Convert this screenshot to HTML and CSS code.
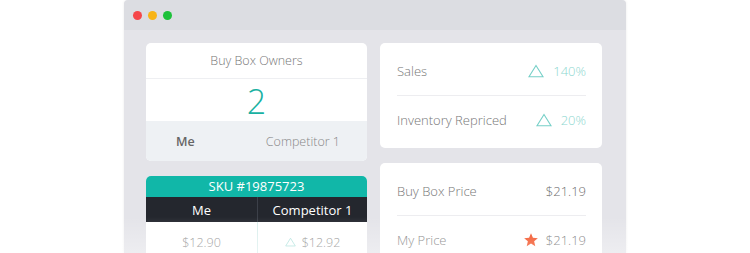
FILE: index.html
```html
<!DOCTYPE html>
<html lang="en">
<head>
    <meta charset="UTF-8">
    <meta name="viewport" content="width=device-width, initial-scale=1.0">
    <title>Repricer Dashboard</title>
    <link rel="stylesheet" href="styles.css">
</head>
<body>
    <div class="window">
        <div class="titlebar">
            <span class="dot dot-red"></span>
            <span class="dot dot-yellow"></span>
            <span class="dot dot-green"></span>
        </div>

        <div class="content">
            <div class="column">
                <div class="card owners">
                    <div class="owners-title">Buy Box Owners</div>
                    <div class="owners-count">2</div>
                    <div class="owners-footer">
                        <span class="me">Me</span>
                        <span>Competitor 1</span>
                    </div>
                </div>

                <div class="card sku">
                    <div class="sku-title">SKU #19875723</div>
                    <div class="sku-row sku-head">
                        <div class="cell">Me</div>
                        <div class="cell">Competitor 1</div>
                    </div>
                    <div class="sku-row sku-data">
                        <div class="cell">$12.90</div>
                        <div class="cell">
                            <svg class="tri tri-small" viewBox="0 0 16 14"><path d="M8 1.5 L15 12.8 H1 Z" /></svg>
                            $12.92
                        </div>
                    </div>
                </div>
            </div>

            <div class="column">
                <div class="card stats">
                    <div class="stat-row">
                        <span class="label">Sales</span>
                        <span class="change">
                            <svg class="tri" viewBox="0 0 16 14"><path d="M8 1.5 L15 12.8 H1 Z" /></svg>
                            140%
                        </span>
                    </div>
                    <div class="stat-row">
                        <span class="label">Inventory Repriced</span>
                        <span class="change">
                            <svg class="tri" viewBox="0 0 16 14"><path d="M8 1.5 L15 12.8 H1 Z" /></svg>
                            20%
                        </span>
                    </div>
                </div>

                <div class="card stats">
                    <div class="stat-row">
                        <span class="label">Buy Box Price</span>
                        <span class="price">$21.19</span>
                    </div>
                    <div class="stat-row">
                        <span class="label">My Price</span>
                        <span class="price">
                            <svg class="star" viewBox="0 0 24 24"><path d="M12 1.8 L14.9 8.6 L22.3 9.2 L16.7 14 L18.4 21.3 L12 17.4 L5.6 21.3 L7.3 14 L1.7 9.2 L9.1 8.6 Z" /></svg>
                            $21.19
                        </span>
                    </div>
                </div>
            </div>
        </div>
    </div>
    <div class="fade"></div>
</body>
</html>
```

FILE: styles.css
```css
body {
    margin: 0;
    padding: 0;
    height: 253px;
    overflow: hidden;
    background-color: #ffffff;
    font-family: 'Open Sans', 'Liberation Sans', sans-serif;
    font-weight: 300;
    color: #777;
    position: relative;
}

.window {
    width: 502px;
    height: 253px;
    overflow: hidden;
    margin: 0 auto;
    background-color: #e4e4e9;
    border-radius: 4px 4px 0 0;
    box-shadow: 0 0 3px rgba(0, 0, 0, 0.08);
}

.titlebar {
    height: 30px;
    background-color: #dcdde2;
    border-radius: 4px 4px 0 0;
    display: flex;
    align-items: center;
    gap: 6px;
    padding-left: 9px;
}

.dot {
    width: 9px;
    height: 9px;
    border-radius: 50%;
}

.dot-red { background-color: #f5474a; }
.dot-yellow { background-color: #f8b416; }
.dot-green { background-color: #1dc13a; }

.content {
    display: grid;
    grid-template-columns: 221px 222px;
    column-gap: 13px;
    padding: 13px 24px 0 22px;
}

.column {
    display: flex;
    flex-direction: column;
    gap: 15px;
}

.card {
    background-color: #ffffff;
    border-radius: 5px;
    overflow: hidden;
}

/* buy box owners */
.owners-title {
    height: 35px;
    line-height: 35px;
    text-align: center;
    font-size: 12.5px;
    border-bottom: 1px solid #eeeff2;
}

.owners-count {
    height: 42px;
    line-height: 44px;
    text-align: center;
    font-size: 34px;
    color: #19b1a2;
}

.owners-footer {
    height: 40px;
    background-color: #eef1f4;
    display: flex;
    justify-content: space-between;
    align-items: center;
    padding: 0 27px 0 30px;
    font-size: 12.5px;
    color: #888;
}

.owners-footer .me {
    font-weight: 600;
    color: #666;
}

/* sku table */
.sku {
    border-radius: 5px 5px 0 0;
}

.sku-title {
    height: 21px;
    line-height: 21px;
    background-color: #11b7a8;
    color: #ffffff;
    text-align: center;
    font-size: 13px;
    font-weight: 400;
}

.sku-row {
    display: grid;
    grid-template-columns: 111px 110px;
}

.sku-head {
    height: 25px;
    background-color: #24272e;
    color: #ffffff;
    font-size: 13px;
    font-weight: 400;
}

.sku-head .cell + .cell {
    border-left: 1px solid #3c4049;
}

.sku-data {
    height: 40px;
    font-size: 12.5px;
    color: #888;
}

.sku-data .cell + .cell {
    border-left: 1px solid #d9eeec;
}

.cell {
    display: flex;
    align-items: center;
    justify-content: center;
    gap: 6px;
}

/* stats cards */
.stats {
    padding: 4px 16px 4px 17px;
}

.stat-row {
    height: 48px;
    display: flex;
    justify-content: space-between;
    align-items: center;
    font-size: 13px;
}

.stat-row + .stat-row {
    border-top: 1px solid #ededf0;
}

.change {
    display: flex;
    align-items: center;
    gap: 9px;
    color: #8ed7d0;
}

.price {
    display: flex;
    align-items: center;
    gap: 7px;
    color: #6f6f6f;
}

.tri {
    width: 16px;
    height: 14px;
    fill: none;
    stroke: #77d0c8;
    stroke-width: 1.1;
}

.tri-small {
    width: 11px;
    height: 10px;
    stroke: #9edcd6;
}

.star {
    width: 16px;
    height: 16px;
    fill: #f24a1c;
}

/* soft fade at the bottom edge */
.fade {
    position: absolute;
    left: 0;
    right: 0;
    bottom: 0;
    height: 36px;
    background: linear-gradient(to bottom, rgba(255, 255, 255, 0), rgba(255, 255, 255, 0.35));
    pointer-events: none;
}
```
